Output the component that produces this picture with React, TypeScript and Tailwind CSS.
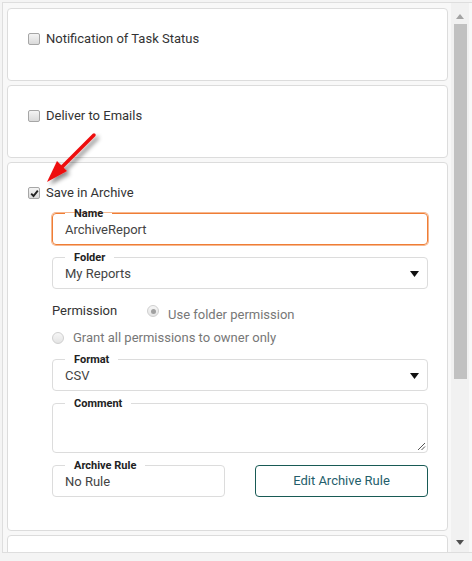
import type { ReactNode } from 'react'

const font = { fontFamily: 'Roboto, "Noto Sans", sans-serif' }

function CheckBox({ checked }: { checked?: boolean }) {
  return (
    <span className="relative flex h-[12px] w-[12px] shrink-0 items-center justify-center rounded-[2px] border border-[#a6a6a6] bg-gradient-to-b from-[#f4f4f4] to-[#dadada]">
      {checked && (
        <svg width="9" height="9" viewBox="0 0 9 9" className="absolute">
          <path d="M1.2 4.6 L3.5 7 L7.8 1.6" fill="none" stroke="#222" strokeWidth="1.9" />
        </svg>
      )}
    </span>
  )
}

function Radio({ checked }: { checked?: boolean }) {
  return (
    <span className="flex h-[12px] w-[12px] shrink-0 items-center justify-center rounded-full border border-[#cfcfcf] bg-gradient-to-b from-[#f6f6f6] to-[#e4e4e4]">
      {checked && <span className="h-[5px] w-[5px] rounded-full bg-[#a0a0a0]" />}
    </span>
  )
}

function Field({
  label,
  children,
  focused,
  className = '',
}: {
  label: string
  children: ReactNode
  focused?: boolean
  className?: string
}) {
  return (
    <fieldset
      className={`rounded-[4px] border px-[12px] pb-[5px] ${
        focused
          ? 'border-[#ef7d35] shadow-[0_0_0_1px_rgba(239,125,53,0.55)]'
          : 'border-[#dcdcdc]'
      } ${className}`}
    >
      <legend className="px-[9px] text-[11px] font-bold leading-[13px] text-[#222]">
        {label}
      </legend>
      {children}
    </fieldset>
  )
}

function SelectField({ label, value }: { label: string; value: string }) {
  return (
    <Field label={label}>
      <div className="mt-[1px] flex h-[18px] items-center justify-between text-[13px] text-[#444]">
        <span>{value}</span>
        <svg width="9" height="6" viewBox="0 0 9 6" className="mr-[-4px]">
          <path d="M0 0 H9 L4.5 6 Z" fill="#111" />
        </svg>
      </div>
    </Field>
  )
}

function Card({ children, className = '' }: { children: ReactNode; className?: string }) {
  return (
    <div className={`shrink-0 rounded-[4px] border border-[#dcdcdc] bg-white pl-[20px] pr-[19px] pt-[20px] ${className}`}>
      {children}
    </div>
  )
}

function CheckRow({ label, checked }: { label: string; checked?: boolean }) {
  return (
    <label className="flex h-[20px] items-center gap-[6px] text-[13px] text-[#333]">
      <CheckBox checked={checked} />
      <span>{label}</span>
    </label>
  )
}

export default function App() {
  return (
    <div className="relative h-[561px] w-[472px] overflow-hidden bg-[#f4f4f4]" style={font}>
      <div className="ml-[2px] mt-[2px] flex h-[551px] border-b border-l border-t border-[#dedede] bg-[#f8f8f8]">
        <div className="flex flex-1 flex-col gap-[4px] overflow-hidden pl-[4px] pr-[3px] pt-[5px]">
          <Card className="h-[73px]">
            <CheckRow label="Notification of Task Status" />
          </Card>
          <Card className="h-[73px]">
            <CheckRow label="Deliver to Emails" />
          </Card>
          <Card className="h-[369px]">
            <CheckRow label="Save in Archive" checked />
            <div className="ml-[24px] mt-[4px] flex flex-col">
              <Field label="Name" focused>
                <div className="mt-[1px] flex h-[18px] items-center text-[13px] text-[#444]">ArchiveReport</div>
              </Field>
              <div className="mt-[6px]">
                <SelectField label="Folder" value="My Reports" />
              </div>
              <div className="mt-[12px] flex h-[20px] items-center text-[13px]">
                <span className="w-[95px] text-[#333]">Permission</span>
                <Radio checked />
                <span className="ml-[9px] mt-[8px] text-[#777]">Use folder permission</span>
              </div>
              <div className="mt-[7px] flex h-[20px] items-center text-[13px]">
                <Radio />
                <span className="ml-[9px] text-[#777]">Grant all permissions to owner only</span>
              </div>
              <div className="mt-[5px]">
                <SelectField label="Format" value="CSV" />
              </div>
              <div className="mt-[6px]">
                <Field label="Comment">
                  <div className="relative h-[37px]">
                    <svg width="9" height="9" viewBox="0 0 9 9" className="absolute bottom-[-4px] right-[-11px]">
                      <path d="M1 8 L8 1 M4.5 8 L8 4.5" stroke="#555" strokeWidth="1" />
                    </svg>
                  </div>
                </Field>
              </div>
              <div className="mt-[6px] grid grid-cols-2 items-end gap-[30px]">
                <Field label="Archive Rule">
                  <div className="mt-[1px] flex h-[18px] items-center text-[13px] text-[#444]">No Rule</div>
                </Field>
                <button className="h-[32px] rounded-[4px] border border-[#185a55] bg-white text-[13px] text-[#245e6b]">
                  Edit Archive Rule
                </button>
              </div>
            </div>
          </Card>
          <Card className="h-[60px]">
            <span />
          </Card>
        </div>
        <div className="flex w-[18px] shrink-0 flex-col items-center bg-[#f1f1f1]">
          <svg width="8" height="5" viewBox="0 0 8 5" className="mt-[11px]">
            <path d="M0 5 H8 L4 0 Z" fill="#a3a3a3" />
          </svg>
          <div className="mt-[5px] h-[355px] w-[13px] bg-[#c1c1c1]" />
          <div className="flex-1" />
          <svg width="8" height="5" viewBox="0 0 8 5" className="mb-[7px]">
            <path d="M0 0 H8 L4 5 Z" fill="#505050" />
          </svg>
        </div>
        <div className="w-[3px] shrink-0 bg-[#f8f8f8]" />
      </div>

      <svg className="pointer-events-none absolute left-0 top-0" width="472" height="561">
        <defs>
          <filter id="sh" x="-50%" y="-50%" width="200%" height="200%">
            <feDropShadow dx="3" dy="3" stdDeviation="2" floodColor="#000" floodOpacity="0.45" />
          </filter>
        </defs>
        <g filter="url(#sh)">
          <line x1="94" y1="135" x2="61" y2="168" stroke="#ee1111" strokeWidth="3.5" strokeLinecap="round" />
          <path d="M47 182 L67 171 L57 161 Z" fill="#ee1111" />
        </g>
      </svg>
    </div>
  )
}
